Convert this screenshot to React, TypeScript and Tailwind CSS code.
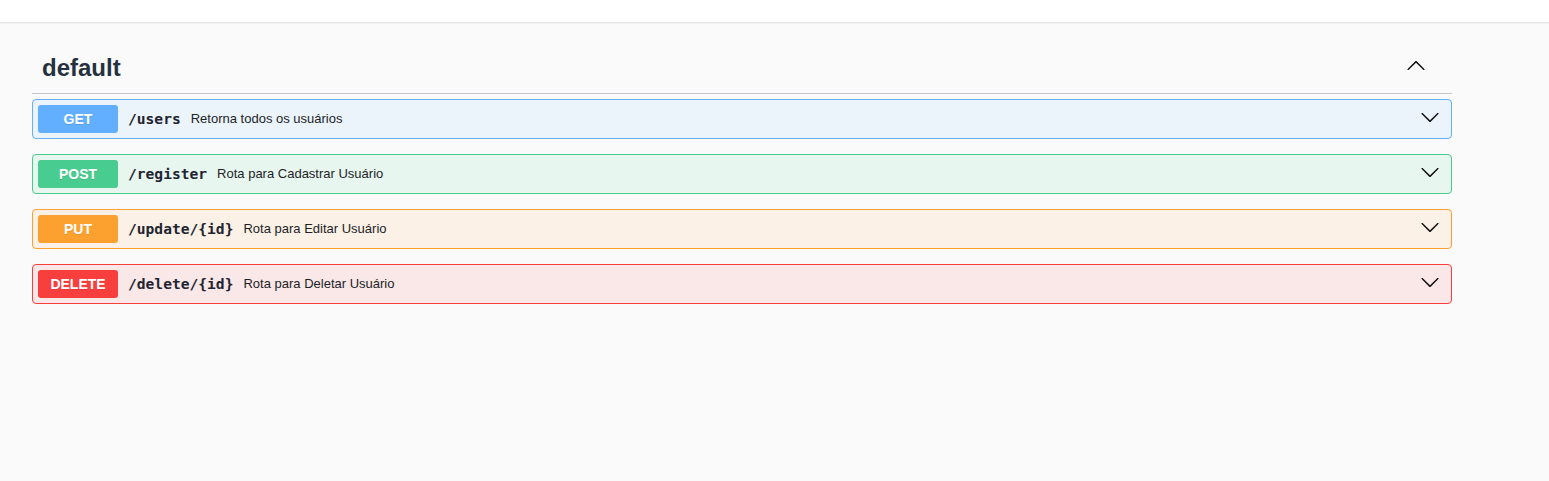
import React from "react";

type Op = {
  method: string;
  path: string;
  summary: string;
  badge: string;
  border: string;
  bg: string;
};

const ops: Op[] = [
  {
    method: "GET",
    path: "/users",
    summary: "Retorna todos os usuários",
    badge: "bg-[#61affe]",
    border: "border-[#61affe]",
    bg: "bg-[#ebf3fb]",
  },
  {
    method: "POST",
    path: "/register",
    summary: "Rota para Cadastrar Usuário",
    badge: "bg-[#49cc90]",
    border: "border-[#49cc90]",
    bg: "bg-[#e8f6f0]",
  },
  {
    method: "PUT",
    path: "/update/{id}",
    summary: "Rota para Editar Usuário",
    badge: "bg-[#fca130]",
    border: "border-[#fca130]",
    bg: "bg-[#fbf1e6]",
  },
  {
    method: "DELETE",
    path: "/delete/{id}",
    summary: "Rota para Deletar Usuário",
    badge: "bg-[#f93e3e]",
    border: "border-[#f93e3e]",
    bg: "bg-[#fae7e7]",
  },
];

function Arrow({ up }: { up?: boolean }) {
  return (
    <svg
      width="20"
      height="20"
      viewBox="0 0 20 20"
      className={up ? "rotate-180" : ""}
      fill="#111"
    >
      <path d="M17.418 6.109c.272-.268.709-.268.979 0s.271.701 0 .969l-7.908 7.83c-.27.268-.707.268-.979 0l-7.908-7.83c-.27-.268-.27-.701 0-.969.271-.268.709-.268.979 0L10 13.25l7.418-7.141z" />
    </svg>
  );
}

export default function App() {
  return (
    <div className="min-h-[481px] bg-[#fafafa] font-['Liberation_Sans',Arial,sans-serif] text-[#3b4151]">
      {/* top bar */}
      <div className="h-[23px] bg-white border-b border-[#e3e3e3] shadow-[0_1px_1px_rgba(0,0,0,0.04)]" />

      <div className="px-[32px] pt-[20px]">
        <div className="w-[1420px]">
          {/* tag header */}
          <div className="flex items-center justify-between border-b border-[#c4c6cb] pl-[10px] pr-[26px] pt-[10px] pb-[10px] mb-[5px]">
            <h3 className="text-[24px] leading-[30px] font-bold text-[#263140]">default</h3>
            <span className="-mt-[5px]">
              <Arrow up />
            </span>
          </div>

          {/* operations */}
          {ops.map((op) => (
            <div
              key={op.method}
              className={`mb-[15px] rounded-[4px] border ${op.border} ${op.bg}`}
            >
              <div className="flex items-center p-[5px]">
                <span
                  className={`${op.badge} min-w-[80px] rounded-[3px] py-[6px] text-center text-[14px] leading-[16px] font-bold text-white [text-shadow:0_1px_0_rgba(0,0,0,0.1)]`}
                >
                  {op.method}
                </span>
                <span className="px-[10px] font-['DejaVu_Sans_Mono',monospace] text-[14.6px] font-bold text-[#1e2430]">
                  {op.path}
                </span>
                <span className="text-[13px] text-[#1c1f26]">{op.summary}</span>
                <span className="ml-auto mr-[6px] -mt-[4px] flex">
                  <Arrow />
                </span>
              </div>
            </div>
          ))}
        </div>
      </div>
    </div>
  );
}
